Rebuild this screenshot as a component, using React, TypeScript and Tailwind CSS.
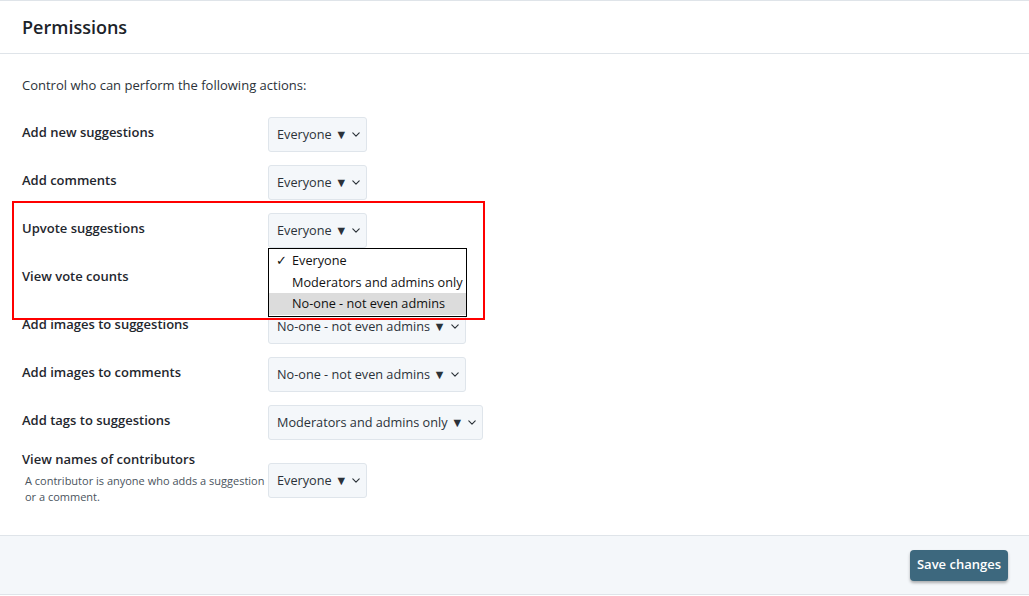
import React from "react";

const font = { fontFamily: '"Open Sans", "Noto Sans", sans-serif' };

interface Row {
  label: string;
  value: string;
  hint?: string;
}

const rows: Row[] = [
  { label: "Add new suggestions", value: "Everyone" },
  { label: "Add comments", value: "Everyone" },
  { label: "Upvote suggestions", value: "Everyone" },
  { label: "View vote counts", value: "Everyone" },
  { label: "Add images to suggestions", value: "No-one - not even admins" },
  { label: "Add images to comments", value: "No-one - not even admins" },
  { label: "Add tags to suggestions", value: "Moderators and admins only" },
  {
    label: "View names of contributors",
    value: "Everyone",
    hint: "A contributor is anyone who adds a suggestion or a comment.",
  },
];

function Chevron() {
  return (
    <svg viewBox="0 0 10 6" className="ml-[5px] h-[5px] w-[8px]" fill="none">
      <path d="M1 1l4 4 4-4" stroke="#2a3137" strokeWidth="1.4" strokeLinecap="round" strokeLinejoin="round" />
    </svg>
  );
}

function FakeSelect({ value, open }: { value: string; open?: boolean }) {
  return (
    <div className="relative">
      <div className="inline-flex h-[35px] items-center rounded-[3px] border border-[#dfe5eb] bg-[#f4f7fa] pl-[8px] pr-[6px] text-[12.7px] text-[#2b3239]">
        <span>{value} ▼</span>
        <Chevron />
      </div>
      {open && (
        <div className="absolute left-0 top-[35px] z-10 w-[199px] border border-black bg-white py-[1px] text-[12.7px] leading-[21.5px] text-[#111]">
          <div className="flex pl-[7px]">
            <span className="w-[16px]">✓</span>
            <span>Everyone</span>
          </div>
          <div className="flex whitespace-nowrap pl-[7px]">
            <span className="w-[16px]" />
            <span>Moderators and admins only</span>
          </div>
          <div className="flex bg-[#dcdcdc] pl-[7px]">
            <span className="w-[16px]" />
            <span>No-one - not even admins</span>
          </div>
        </div>
      )}
    </div>
  );
}

export default function App() {
  return (
    <div style={font} className="relative min-h-[596px] w-[1029px] bg-white text-[#1f272e]">
      <div className="border-y border-[#dfe4e9]">
        <div className="flex h-[52px] items-center px-[22px]">
          <h1 className="text-[18px] font-semibold text-[#1c2329]">Permissions</h1>
        </div>
      </div>

      <div className="px-[22px] pb-[27px] pt-[21px]">
        <p className="text-[13px] leading-[20px] text-[#2b3239]">Control who can perform the following actions:</p>
        <div className="mt-[22px] flex flex-col gap-[13px]">
          {rows.map((r, i) => (
            <div key={r.label} className="flex items-center">
              <div className="w-[246px] shrink-0 -translate-y-[3px]">
                <div className="text-[13px] font-semibold leading-[18px]">{r.label}</div>
                {r.hint && (
                  <div className="mt-[5px] pl-[3px] text-[11px] leading-[16px] text-[#4a545d]">{r.hint}</div>
                )}
              </div>
              <FakeSelect value={r.value} open={i === 2} />
            </div>
          ))}
        </div>
      </div>

      <div className="flex h-[60px] items-center justify-end border-y border-[#dfe4e9] bg-[#f4f7fa] px-[21px]">
        <button className="h-[31px] rounded-[4px] bg-[#3d687e] px-[7px] text-[13px] font-semibold text-white shadow-[0_2px_3px_rgba(0,0,0,0.3)]">
          Save changes
        </button>
      </div>

      <div className="pointer-events-none absolute left-[12px] top-[201px] h-[119px] w-[473px] border-2 border-[#ff0000]" />
    </div>
  );
}
